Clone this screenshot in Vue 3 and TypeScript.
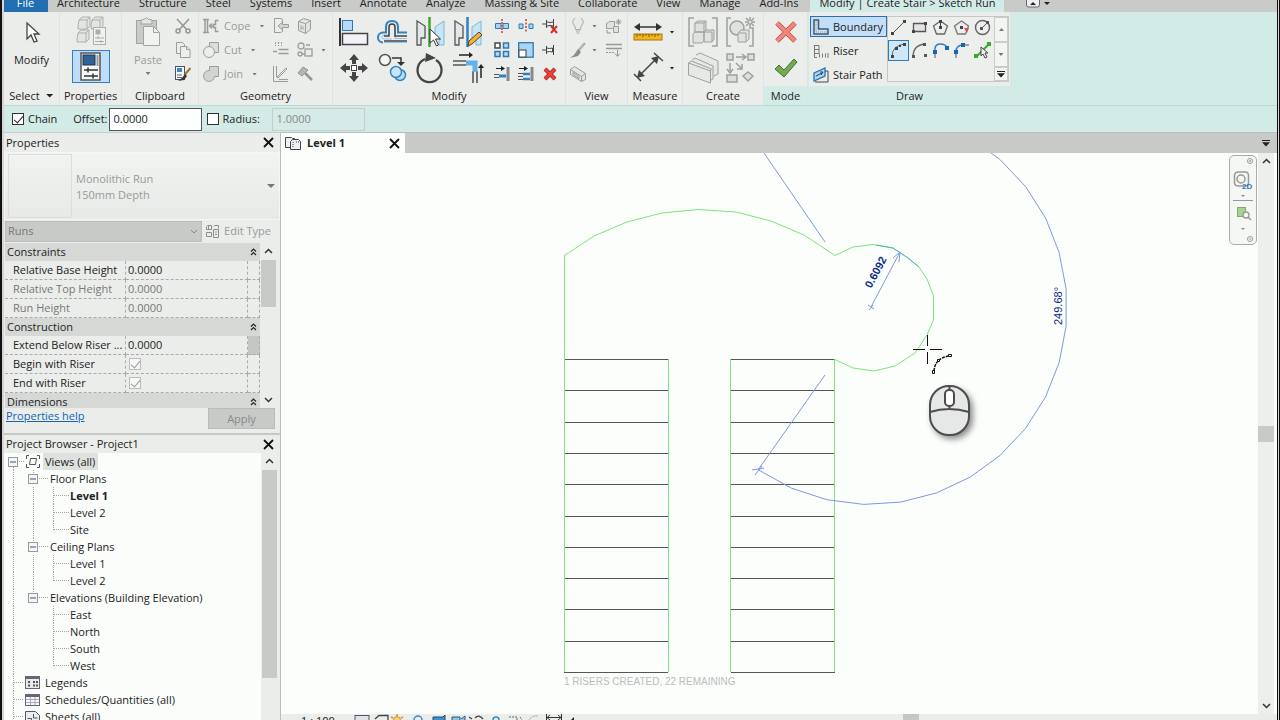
<script setup lang="ts">
import { ref } from 'vue'

type Guide = 'box' | 'line' | 'tee' | 'end' | 'none'

interface TreeRow {
  label: string
  guides: Guide[]
  icon?: 'views' | 'legend' | 'schedule' | 'sheet'
  active?: boolean
  selected?: boolean
}

interface Point {
  x: number
  y: number
}

const tabs = [
  'Architecture', 'Structure', 'Steel', 'Systems', 'Insert', 'Annotate', 'Analyze',
  'Massing & Site', 'Collaborate', 'View', 'Manage', 'Add-Ins',
]

const chain = ref(true)
const useRadius = ref(false)
const offset = ref('0.0000')
const radius = ref('1.0000')

const groups = [
  {
    name: 'Constraints',
    rows: [
      { id: 'base', name: 'Relative Base Height', value: '0.0000', muted: false },
      { id: 'top', name: 'Relative Top Height', value: '0.0000', muted: true },
      { id: 'run', name: 'Run Height', value: '0.0000', muted: true },
    ],
  },
  {
    name: 'Construction',
    rows: [
      { id: 'extend', name: 'Extend Below Riser ...', value: '0.0000', muted: false, more: true },
      { id: 'begin', name: 'Begin with Riser', check: true },
      { id: 'finish', name: 'End with Riser', check: true },
    ],
  },
  { name: 'Dimensions', rows: [] },
] as {
  name: string
  rows: { id: string; name: string; value?: string; muted?: boolean; more?: boolean; check?: boolean }[]
}[]

const tree: TreeRow[] = [
  { label: 'Views (all)', guides: ['box'], icon: 'views', selected: true },
  { label: 'Floor Plans', guides: ['line', 'box'] },
  { label: 'Level 1', guides: ['line', 'line', 'tee'], active: true },
  { label: 'Level 2', guides: ['line', 'line', 'tee'] },
  { label: 'Site', guides: ['line', 'line', 'end'] },
  { label: 'Ceiling Plans', guides: ['line', 'box'] },
  { label: 'Level 1', guides: ['line', 'line', 'tee'] },
  { label: 'Level 2', guides: ['line', 'line', 'end'] },
  { label: 'Elevations (Building Elevation)', guides: ['line', 'box'] },
  { label: 'East', guides: ['line', 'none', 'tee'] },
  { label: 'North', guides: ['line', 'none', 'tee'] },
  { label: 'South', guides: ['line', 'none', 'tee'] },
  { label: 'West', guides: ['line', 'none', 'end'] },
  { label: 'Legends', guides: ['tee'], icon: 'legend' },
  { label: 'Schedules/Quantities (all)', guides: ['tee'], icon: 'schedule' },
  { label: 'Sheets (all)', guides: ['tee'], icon: 'sheet' },
]

const treads = Array.from({ length: 11 }, (_, i) => Math.round(359 + i * 31.3) + 0.5)

const centre: Point = { x: 870, y: 307.5 }
const angleArc = Array.from({ length: 18 }, (_, i) => {
  const a = ((124.3 - i * 10.81) * Math.PI) / 180
  return `${(centre.x + 197 * Math.cos(a)).toFixed(1)},${(centre.y + 197 * Math.sin(a)).toFixed(1)}`
}).join(' ')
</script>

<template>
  <div class="app">
    <nav class="tabs" aria-label="Ribbon tabs">
      <button class="tab file">File</button>
      <button v-for="t in tabs" :key="t" class="tab">{{ t }}</button>
      <button class="tab current">Modify | Create Stair &gt; Sketch Run</button>
      <button class="tab-tool" aria-label="Minimize ribbon">
        <svg width="26" height="12" viewBox="0 0 26 12">
          <rect x="1.500" y="-4" width="13" height="11" rx="2" fill="#eee" stroke="#667" />
          <path d="M5 5l3-3 3 3z" fill="#222" /><path d="M19 2h6l-3 3z" fill="#222" />
        </svg>
      </button>
    </nav>

    <div class="ribbon">
      <section class="panel select">
        <div class="body">
          <button class="stack">
            <svg width="24" height="32" viewBox="0 0 24 32"><path d="M7 5v16l4-4 3 7 3-1-3-7h5z" fill="#fff" stroke="#444" stroke-width="1.300" /></svg>
            <span>Modify</span>
          </button>
        </div>
        <h2>Select <i class="caret dark"></i></h2>
      </section>

      <section class="panel props">
        <div class="body two">
          <button class="icon" aria-label="Type properties">
            <svg width="32" height="32" viewBox="0 0 32 32" fill="#e3e5e3" stroke="#adafad">
              <path d="M4 4l3-3h8v9l-3 3H3q0-5 1-9zM17 4l3-3h8v9l-3 3h-9q0-5 1-9zM3 17l3-3h8v9l-3 3H2q0-5 1-9z" />
              <path d="M4 4h8v9M17 4h8v9M3 17h8v9M12 4l3-3M25 4l3-3M11 17l3-3" fill="none" />
              <rect x="18.500" y="11.500" width="12" height="17" fill="#f0f2f0" /><rect x="21" y="14" width="4" height="4" fill="#aaa" />
              <path d="M20 22h9M20 25.500h9M23 20v3M26 24v3" />
            </svg>
          </button>
          <button class="icon pressed" aria-label="Properties">
            <svg width="22" height="30" viewBox="0 0 22 30">
              <rect x="1" y="1" width="19" height="27" fill="#f7f9fb" stroke="#555" stroke-width="1.500" />
              <rect x="3" y="3" width="12" height="10" fill="#2f6398" stroke="#234" /><path d="M17.500 3v11" stroke="#999" stroke-width="2" />
              <path d="M4 18h14M4 24h14M8 15.500v5M13 21.500v5" stroke="#333" stroke-width="1.500" />
            </svg>
          </button>
        </div>
        <h2>Properties</h2>
      </section>

      <section class="panel clip">
        <div class="body">
          <button class="stack muted">
            <svg width="28" height="32" viewBox="0 0 28 32" fill="#e4e6e4" stroke="#a2a4a2">
              <rect x="2.500" y="4.500" width="20" height="23" fill="#c9cbc9" /><path d="M7 8V4l4-1q1.500-3 3 0l4 1v4z" />
              <path d="M9.500 10.500h10l6 6v13h-16z" fill="#f1f3f1" /><path d="M19.500 10.500v6h6" fill="none" />
            </svg>
            <span>Paste</span><i class="caret"></i>
          </button>
          <div class="small one">
            <button aria-label="Cut to clipboard"><svg width="16" height="16" viewBox="0 0 16 16" fill="none" stroke="#949694" stroke-width="1.500"><path d="M2 1l10 11M14 1L4 12" /><circle cx="3" cy="13" r="2" /><circle cx="13" cy="13" r="2" /></svg></button>
            <button aria-label="Copy to clipboard"><svg width="16" height="16" viewBox="0 0 16 16" fill="#eceeec" stroke="#9c9e9c"><path d="M1.500.5h6l2 2v9h-8z" /><path d="M5.500 4.500h6l3.500 3v8H5.500z" /><path d="M11.500 4.500v3h3" /></svg></button>
            <button aria-label="Match type"><svg width="16" height="16" viewBox="0 0 16 16"><rect x=".5" y=".5" width="9" height="13" fill="#f6f8fa" stroke="#456" /><rect x="2" y="2" width="5" height="4" fill="#3f85c4" /><path d="M2 9h5M2 11.500h5" stroke="#666" /><path d="M15.500 2l-6 7" stroke="#9a7430" stroke-width="2" /><path d="M10 8l2 2-3 4-6 1 4-3z" fill="#333" /></svg></button>
          </div>
        </div>
        <h2>Clipboard</h2>
      </section>

      <section class="panel geo muted">
        <div class="body">
          <div class="named">
            <button><svg width="16" height="16" viewBox="0 0 16 16" fill="none" stroke="#9a9c9a" stroke-width="1.500"><path d="M0 1.500h6M0 14.500h6M2 2v12M4.500 2v12M7 8h4M9 5.500L6.500 8 9 10.500M15.500 2.500h-3v4h-2v3h2v4h3" /></svg><span>Cope</span><i class="caret"></i></button>
            <button><svg width="16" height="16" viewBox="0 0 16 16" fill="#eceeec" stroke="#9a9c9a"><path d="M6.500.5h9v10h-9z" fill="#dcdedc" /><circle cx="6" cy="10" r="5.500" /></svg><span>Cut</span><i class="caret"></i></button>
            <button><svg width="16" height="16" viewBox="0 0 16 16" fill="#d2d4d2" stroke="#9a9c9a"><path d="M6.500.5h9v10h-4a5.500 5.500 0 1 1-5-6z" /></svg><span>Join</span><i class="caret"></i></button>
          </div>
          <div class="small">
            <button aria-label="Wall opening"><svg width="16" height="16" viewBox="0 0 16 16" fill="#eceeec" stroke="#9a9c9a"><path d="M9.500 4V1.500L8 .5H1.500v14h6l2-1V11" /><path d="M15.500 6.500h-6V4L5 8l4.500 4V9.500h6z" fill="#d4d6d4" /></svg></button>
            <button aria-label="Split face"><svg width="16" height="16" viewBox="0 0 16 16" fill="#e2e4e2" stroke="#9a9c9a"><path d="M1.500 3.500l7 2 5-3v9l-5 4-7-3zM8.500 5.500v10M4 7.500v4M6 8.500v3M1.500 3.500l5-3 7 2" /></svg></button>
            <button aria-label="Beam joins"><svg width="16" height="16" viewBox="0 0 16 16" stroke="#9a9c9a" fill="none"><path d="M2.500 0v4M5.500 0v4M8.500 0v4" stroke-dasharray="2 1" /><path d="M5.500 7.500h10M5.500 11.500h10M0 9.500h4" stroke-width="1.500" /></svg></button>
            <button class="wide" aria-label="Paint"><svg width="16" height="16" viewBox="0 0 16 16" fill="none" stroke="#9a9c9a" stroke-width="1.300"><circle cx="4" cy="4" r="3" /><rect x="8" y="7" width="7" height="7" /><circle cx="3" cy="12" r="2" /><path d="M9 3h4M5 12h3" /></svg><i class="caret"></i></button>
            <button aria-label="Wall joins"><svg width="16" height="16" viewBox="0 0 16 16" fill="none" stroke="#9a9c9a"><path d="M.5 0v15.500H15M3.500 0v11M14 3l-8 8-2 1 1-2 8-8zM6 13.500h9" /></svg></button>
            <button aria-label="Demolish"><svg width="16" height="16" viewBox="0 0 16 16" fill="#b4b6b4" stroke="#949694"><path d="M1 7l5-6 5 3-6 6z" /><path d="M8 7l7 7" stroke-width="2.500" /></svg></button>
          </div>
        </div>
        <h2>Geometry</h2>
      </section>

      <section class="panel mod">
        <div class="body">
          <div class="large four">
            <button aria-label="Align"><svg width="32" height="32" viewBox="0 0 32 32"><path d="M2 2v28" stroke="#333" stroke-width="2" /><rect x="4.500" y="4.500" width="10" height="10" fill="#b9dcf6" stroke="#2d78ba" /><rect x="4.500" y="17.500" width="25" height="11" fill="#f2f2f8" stroke="#444" stroke-width="1.500" /></svg></button>
            <button aria-label="Offset"><svg width="32" height="32" viewBox="0 0 32 32" fill="none"><path d="M7 26.500a5 5 0 0 1 0-10h3V11q0-6 6-6t6 6v5.500h9" stroke="#3682bd" stroke-width="2" /><path d="M31 26.500H8M31 22.500H19V11q0-3-3-3t-3 3v8H8q-2 0-2 2t2 2h8" stroke="#8fc5eb" /><path d="M31 20H19V11q0-3-3-3t-3 3v9H8M31 25H8" stroke="#444" stroke-width="1.500" /></svg></button>
            <button aria-label="Mirror by picking axis"><svg width="32" height="32" viewBox="0 0 32 32"><path d="M3 5l8 5v12H7v7H3z" fill="#e4e7ea" stroke="#555" stroke-width="1.300" /><path d="M30 5l-9 6v11h4v7h5z" fill="#c6e6f8" stroke="#7fb6d8" /><path d="M15.500 1v30" stroke="#44a52e" stroke-width="2.500" /><path d="M16 13v14l3.500-3 3 6 2-1-3-6h5z" fill="#fff" stroke="#333" /></svg></button>
            <button aria-label="Mirror by drawing axis"><svg width="32" height="32" viewBox="0 0 32 32"><path d="M3 5l8 5v12H7v7H3z" fill="#e4e7ea" stroke="#555" stroke-width="1.300" /><path d="M29 5l-9 6v11h4v7h5z" fill="#c6e6f8" stroke="#7fb6d8" /><path d="M15.500 1v30" stroke="#2e82c2" stroke-width="2.500" /><path d="M27 16l3 3-10 9-4 2 1-5z" fill="#f1b43c" stroke="#59401d" /></svg></button>
            <button aria-label="Move"><svg width="32" height="32" viewBox="0 0 32 32" fill="#444"><path d="M16 2l5 6h-3v4h-4V8h-3zM16 30l5-6h-3v-4h-4v4h-3zM2 16l6-5v3h4v4H8v3zM30 16l-6-5v3h-4v4h4v3z" /><rect x="13.500" y="13.500" width="5" height="5" fill="#fff" stroke="#444" /></svg></button>
            <button aria-label="Copy"><svg width="32" height="32" viewBox="0 0 32 32"><circle cx="9" cy="8" r="5.500" fill="#f5f5f5" stroke="#555" stroke-width="1.500" /><path d="M16 6h9v6" fill="none" stroke="#333" stroke-width="1.500" /><path d="M21 10h8l-4 4z" fill="#333" /><circle cx="24" cy="23" r="5.500" fill="#b9def6" stroke="#3a85bd" stroke-width="1.500" /><circle cx="20" cy="20" r="5.500" fill="#c9e6f8" stroke="#3a85bd" stroke-width="1.500" /></svg></button>
            <button aria-label="Rotate"><svg width="32" height="32" viewBox="0 0 32 32"><path d="M11 7a12 12 0 1 0 11 1" fill="none" stroke="#444" stroke-width="2.300" /><path d="M12 1l10 5-11 4z" fill="#444" /></svg></button>
            <button aria-label="Trim to corner"><svg width="32" height="32" viewBox="0 0 32 32" fill="none"><path d="M1 9h13M1 13h13M21 19v12M25 19v12" stroke="#555" stroke-width="1.600" /><path d="M14 11h9v9" stroke="#62b1e8" stroke-width="5" /><path d="M7 3h12M29 26V14" stroke="#222" stroke-width="1.500" /><path d="M17 0l4 3-4 3zM26 16l3-4 3 4z" fill="#222" /></svg></button>
          </div>
          <div class="small three">
            <button aria-label="Split element"><svg width="16" height="16" viewBox="0 0 16 16"><path d="M1.500 5.500H7v5H1.500zM9 5.500h5.500v5H9z" fill="#a9d4f1" stroke="#2f78b4" /><path d="M8 1v14" stroke="#d43c2c" stroke-dasharray="2 1" stroke-width="1.500" /></svg></button>
            <button aria-label="Split with gap"><svg width="16" height="16" viewBox="0 0 16 16"><path d="M1 6h4v4.500H1zM11 6h4v4.500h-4z" fill="#a9d4f1" stroke="#2f78b4" /><path d="M8 1v14" stroke="#d43c2c" stroke-dasharray="2 1.500" stroke-width="1.500" /></svg></button>
            <button aria-label="Unpin"><svg width="16" height="16" viewBox="0 0 16 16"><path d="M0 6h4M4.500 2v8M5 4q3 1 6 0M5 8q3-1 6 0M11.500 1v10" stroke="#444" fill="none" /><path d="M9 8l6 7M15 8l-6 7" stroke="#cf3027" stroke-width="2" /></svg></button>
            <button aria-label="Array"><svg width="16" height="16" viewBox="0 0 16 16" stroke-width="1.500"><rect x="1" y="1" width="5" height="5" fill="#fff" stroke="#444" /><path d="M9.500 1h5v5h-5zM1 9.500h5v5H1zM9.500 9.500h5v5h-5z" fill="#b5dcf5" stroke="#2f78b4" /></svg></button>
            <button aria-label="Scale"><svg width="16" height="16" viewBox="0 0 16 16"><rect x=".7" y=".7" width="14.500" height="14.500" fill="#a9d6f4" stroke="#2f78b4" stroke-width="1.300" /><rect x="1" y="8" width="7" height="7" fill="#fff" stroke="#444" /></svg></button>
            <button aria-label="Pin"><svg width="16" height="16" viewBox="0 0 16 16" fill="#f4f4f4" stroke="#444"><path d="M0 8h4M4.500 4v8M4.500 6q3 1 6 0v4q-3-1-6 0M11.500 3v10" /></svg></button>
            <button aria-label="Trim single"><svg width="16" height="16" viewBox="0 0 16 16"><path d="M2 2.500h6" stroke="#222" /><path d="M7 0l4 2.500L7 5z" fill="#222" /><path d="M0 8.500h5M0 11.500h5" stroke="#555" /><path d="M5 10h7" stroke="#2f82c2" stroke-width="3" /><path d="M14 1v14" stroke="#888" stroke-width="3" /></svg></button>
            <button aria-label="Trim multiple"><svg width="16" height="16" viewBox="0 0 16 16"><path d="M1 2.500h6" stroke="#222" /><path d="M6 0l4 2.500L6 5z" fill="#222" /><path d="M0 7.500h5M0 10.500h5M0 13.500h5" stroke="#555" /><path d="M5 8h7M5 13h7" stroke="#2f82c2" stroke-width="2.500" /><path d="M14 1v14" stroke="#888" stroke-width="3" /></svg></button>
            <button aria-label="Delete"><svg width="16" height="16" viewBox="0 0 16 16"><path d="M3 3l10 10M13 3L3 13" stroke="#a41e19" stroke-width="4" /><path d="M3 3l10 10M13 3L3 13" stroke="#e6453c" stroke-width="2.500" /></svg></button>
          </div>
        </div>
        <h2>Modify</h2>
      </section>

      <section class="panel view">
        <div class="body">
          <div class="small views">
            <button class="wide" aria-label="Hide in view"><svg width="16" height="16" viewBox="0 0 16 16" fill="#e9ebe9" stroke="#a6a8a6"><path d="M5.500 11.500q0-3-1.500-4.500a5 5 0 1 1 8 0q-1.500 1.500-1.500 4.500zM6 13h4M6.500 15h3" /></svg><i class="caret"></i></button>
            <button aria-label="Displace elements"><svg width="16" height="16" viewBox="0 0 16 16" fill="#e0e2e0" stroke="#9a9c9a"><path d="M.5 5.500l3-2h5v5l-2 2h-6zM7.500 8.500h5v6h-5zM1 12v3h4M12.500 1v6M9.500 4h6M10.500 2l4 4M14.500 2l-4 4" /></svg></button>
            <button class="wide" aria-label="Override graphics"><svg width="16" height="16" viewBox="0 0 16 16"><path d="M15 1L8 9" stroke="#b0b0b0" stroke-width="2.500" /><path d="M8 7l3 3-3 4-8 2 4-3z" fill="#8c8c8c" /></svg><i class="caret"></i></button>
            <button aria-label="Linework"><svg width="16" height="16" viewBox="0 0 16 16" stroke="#999" fill="none"><path d="M0 2.500h16M0 6.500h16" stroke-width="1.500" /><path d="M0 10.500h8" stroke-dasharray="2 1" /><path d="M11.500 8v6M9 11.500l2.500 3 2.500-3" /></svg></button>
            <button class="wide" aria-label="Section box"><svg width="16" height="16" viewBox="0 0 16 16" fill="#e4e6e4" stroke="#9a9c9a"><path d="M.5 3.500l4-3 11 7v6l-4 2-11-7zM.5 3.500l11 7v5M11.500 10.500l4-3" /><path d="M3 6.500l6 4v2l-6-4z" /></svg></button>
          </div>
        </div>
        <h2>View</h2>
      </section>

      <section class="panel measure">
        <div class="body">
          <div class="large">
            <button aria-label="Measure"><svg width="32" height="32" viewBox="0 0 32 32"><path d="M4 11h24" stroke="#333" stroke-width="1.500" /><path d="M2 11l6-4v8zM30 11l-6-4v8z" fill="#333" /><rect x="2" y="18" width="28" height="6" fill="#f2b51f" stroke="#a87909" /><path d="M5 18v3M8 18v2M11 18v3M14 18v2M17 18v3M20 18v2M23 18v3M26 18v2" stroke="#805600" /></svg><i class="caret dark"></i></button>
            <button aria-label="Aligned dimension"><svg width="32" height="32" viewBox="0 0 32 32"><path d="M5 26L26 5M2 22l7 7M22 1l9 8" stroke="#444" stroke-width="1.500" /><path d="M5 26l2-8 6 6zM27 4l-8 2 6 6z" fill="#444" /></svg><i class="caret dark"></i></button>
          </div>
        </div>
        <h2>Measure</h2>
      </section>

      <section class="panel create">
        <div class="body">
          <div class="large">
            <button aria-label="Create assembly"><svg width="32" height="32" viewBox="0 0 32 32" fill="#e0e2e0" stroke="#9ea09e"><path d="M7 2H2v28h5M25 2h5v28h-5" fill="none" stroke-width="1.500" /><path d="M6 7l3-2h8v9h7l3-2v12l-3 2H6z" stroke="none" /><path d="M8 7l3-2h8v9l-2 2H8zM6 18l2-2h9v9l-2 2H6zM17 16l2-2h8v9l-2 3h-8zM8 7h9v9M17 16h8v10M17 7l2-2" /></svg></button>
            <button aria-label="Create parts"><svg width="32" height="32" viewBox="0 0 32 32" fill="#e0e2e0" stroke="#9ea09e"><path d="M7 2H3v28h4M25 12h4v18h-4" fill="none" stroke-width="1.500" /><circle cx="13" cy="12" r="7" stroke-width="1.500" /><path d="M14 17l3-3h8v9l-3 3h-8zM14 17h8v9" /><path d="M26 1v10M21 6h10M22 2l8 8M30 2l-8 8" stroke-width="1.500" /><circle cx="26" cy="6" r="2" /></svg></button>
            <button aria-label="Create group"><svg width="32" height="32" viewBox="0 0 32 32" fill="#e6e8e6" stroke="#9ea09e"><path d="M9 3l4-2 18 8v13l-4 2" /><path d="M5 8l3-2 18 8v13l-4 2" /><path d="M1.500 11l22 8v12l-22-8zM1.500 11l3-2 20 8-1 2" /></svg></button>
            <button aria-label="Create similar"><svg width="32" height="32" viewBox="0 0 32 32" fill="#dcdedc" stroke="#9ea09e" stroke-width="1.500"><rect x="3" y="2" width="6" height="6" /><rect x="24" y="2" width="6" height="6" /><rect x="3" y="23" width="10" height="7" /><path d="M24 20l5 4-5 5-5-5z" /><path d="M12 5h9M18 2l4 3-4 3M6 11v8M3 17l3 4 3-4M12 11l6 6M18 12v5h-5" fill="none" /></svg></button>
          </div>
        </div>
        <h2>Create</h2>
      </section>

      <section class="panel mode">
        <div class="body two">
          <button class="icon" aria-label="Cancel edit mode"><svg width="24" height="24" viewBox="0 0 24 24"><path d="M3 3l18 18M21 3L3 21" stroke="#bd5147" stroke-width="5" /><path d="M3 3l18 18M21 3L3 21" stroke="#f0897b" stroke-width="3.500" /></svg></button>
          <button class="icon" aria-label="Finish edit mode"><svg width="24" height="24" viewBox="0 0 24 24"><path d="M1 13l4-4 5 5L20 3l3 3-13 15z" fill="#73ac50" stroke="#43722d" /></svg></button>
        </div>
        <h2>Mode</h2>
      </section>

      <section class="panel draw">
        <div class="body">
          <div class="named sketch">
            <button class="on"><svg width="16" height="16" viewBox="0 0 16 16"><path d="M1 1h4.500v9H15v5H1z" fill="#cde4f8" stroke="#48586a" stroke-width="1.500" /><path d="M3 3v10h11" stroke="#8296aa" fill="none" stroke-dasharray="1 1" /></svg><span>Boundary</span></button>
            <button><svg width="16" height="16" viewBox="0 0 16 16" fill="none" stroke="#777"><path d="M1.500 2v12.500H4M1 2.500h5V10M1 6.500h5M1 10.500h5M6.500 14.500v-4M9.500 14.500v-4M12.500 14.500v-4M15 10v5" /></svg><span>Riser</span></button>
            <button><svg width="16" height="16" viewBox="0 0 16 16"><path d="M11 4h4v11H2" stroke="#445" fill="none" /><path d="M1 6l11-5v8L1 14z" fill="#a9d5f2" stroke="#2b70a8" stroke-width="1.300" /><path d="M3 9l6-3M7 5l3 0-2 3" stroke="#246" fill="none" /></svg><span>Stair Path</span></button>
          </div>
          <div class="gallery">
            <div class="tools">
              <button aria-label="Line"><svg width="17" height="17" viewBox="0 0 17 17"><path d="M2 15L15 2" stroke="#555" /><path d="M1 13h3v3H1zM13 1h3v3h-3z" fill="#444" /></svg></button>
              <button aria-label="Rectangle"><svg width="17" height="17" viewBox="0 0 17 17"><path d="M2.500 4.500h12v8h-12z" fill="#e3e3e3" stroke="#555" stroke-width="1.300" /><path d="M1 11h3v3H1zM13 3h3v3h-3z" fill="#444" /></svg></button>
              <button aria-label="Inscribed polygon"><svg width="17" height="17" viewBox="0 0 17 17"><path d="M8.500 2l7 5-3 8h-8l-3-8z" fill="#eee" stroke="#666" stroke-width="1.300" /><path d="M8.500 2v7" stroke="#444" /><path d="M7 1h3v3H7zM7 7h3v3H7z" fill="#444" /></svg></button>
              <button aria-label="Circumscribed polygon"><svg width="17" height="17" viewBox="0 0 17 17"><path d="M8.500 2l7 5-3 8h-8l-3-8z" fill="#eee" stroke="#777" stroke-width="1.300" /><path d="M7 7h3v3H7z" fill="#444" /><path d="M11 9h5l-2 5z" fill="#d5534b" /></svg></button>
              <button aria-label="Circle"><svg width="17" height="17" viewBox="0 0 17 17"><circle cx="8.500" cy="8.500" r="7" fill="#eee" stroke="#666" stroke-width="1.500" /><path d="M8 9l6-6" stroke="#555" /><path d="M6 8h3v3H6zM12 2h3v3h-3z" fill="#555" /></svg></button>
              <button class="on" aria-label="Start-end-radius arc"><svg width="17" height="17" viewBox="0 0 17 17"><path d="M2 15Q2 3 15 2" fill="none" stroke="#666" /><path d="M1 13h3v3H1zM13 1h3v3h-3zM5 5h3v3H5zM9 3h2v2H9z" fill="#444" /></svg></button>
              <button aria-label="Center-ends arc"><svg width="17" height="17" viewBox="0 0 17 17"><path d="M2 15Q2 3 14 2" fill="none" stroke="#666" stroke-width="1.300" /><path d="M1 13h3v3H1zM12 1h3v3h-3zM13 12h3v3h-3z" fill="#555" /></svg></button>
              <button aria-label="Tangent end arc"><svg width="17" height="17" viewBox="0 0 17 17"><path d="M3 10Q2 2 8 2q6 0 7 4" fill="none" stroke="#2b7fd2" stroke-width="1.500" /><path d="M1 8h4v4H1zM13 4h4v4h-4z" fill="#1865b4" /><path d="M3 12v4" stroke="#555" /></svg></button>
              <button aria-label="Fillet arc"><svg width="17" height="17" viewBox="0 0 17 17"><path d="M3 10Q3 3 10 3" fill="none" stroke="#2b7fd2" stroke-width="1.500" /><path d="M1 8h4v4H1zM8 1h4v4H8z" fill="#1865b4" /><path d="M3 12v4M12 3h4" stroke="#555" /></svg></button>
              <button aria-label="Pick lines"><svg width="17" height="17" viewBox="0 0 17 17"><path d="M2 15L15 2" stroke="#33ad2b" stroke-width="2" /><path d="M0 12h4v4H0zM13 0h4v4h-4z" fill="#33ad2b" /><path d="M7 5v9l2-2 2 4 2-1-2-4h3z" fill="#eee" stroke="#444" /></svg></button>
            </div>
            <div class="scroller">
              <button aria-label="Previous row"><i class="caret up"></i></button>
              <button aria-label="Next row"><i class="caret"></i></button>
              <button aria-label="More tools"><i class="caret dark bar"></i></button>
            </div>
          </div>
        </div>
        <h2>Draw</h2>
      </section>
    </div>

    <form class="options" @submit.prevent>
      <label class="tick"><input v-model="chain" type="checkbox" />Chain</label>
      <label for="offset" class="offset-label">Offset:</label>
      <input id="offset" v-model="offset" class="field" type="text" />
      <label class="tick radius"><input v-model="useRadius" type="checkbox" />Radius:</label>
      <input v-model="radius" class="field off" type="text" aria-label="Radius value" disabled />
    </form>

    <main class="work">
      <aside class="dock">
        <section class="properties">
          <header class="title">
            <h3>Properties</h3>
            <button aria-label="Close properties"><svg width="11" height="11" viewBox="0 0 11 11"><path d="M1 1l9 9M10 1l-9 9" stroke="#111" stroke-width="1.800" /></svg></button>
          </header>
          <div class="type">
            <div class="thumb"></div>
            <div class="type-name">Monolithic Run<br />150mm Depth</div>
            <i class="caret big"></i>
          </div>
          <div class="category">
            <div class="pick">
              <select aria-label="Category" disabled><option>Runs</option></select>
              <svg width="8" height="6" viewBox="0 0 8 6"><path d="M1 1l3 3 3-3" fill="none" stroke="#888" /></svg>
            </div>
            <button class="edit" disabled>
              <svg width="14" height="14" viewBox="0 0 14 14" fill="none" stroke="#8c8c8c"><path d="M.5 2.500l1-1h4v4h-5zM7.500 2.500l1-1h4v3M.5 8.500h5v4h-5zM7.500 5.500h5v8h-5zM9 8h2M9 10.500h2M2.500 2v3" /></svg>
              Edit Type
            </button>
          </div>
          <div class="scrolled">
            <div class="grid-wrap">
              <table>
                <colgroup><col class="c1" /><col /><col class="c3" /></colgroup>
                <tbody v-for="g in groups" :key="g.name">
                  <tr class="group">
                    <th colspan="3"><div><span>{{ g.name }}</span><svg width="7" height="8" viewBox="0 0 7 8"><path d="M1 3.500L3.500 1 6 3.500M1 7l2.500-2.500L6 7" fill="none" stroke="#222" stroke-width="1.200" /></svg></div></th>
                  </tr>
                  <tr v-for="r in g.rows" :key="r.id" :class="{ muted: r.muted }">
                    <td class="name"><label :for="r.check ? r.id : undefined">{{ r.name }}</label></td>
                    <td class="value"><input v-if="r.check" :id="r.id" type="checkbox" checked disabled /><template v-else>{{ r.value }}</template></td>
                    <td :class="{ more: r.more }"></td>
                  </tr>
                </tbody>
              </table>
            </div>
            <div class="vscroll">
              <svg width="9" height="6" viewBox="0 0 9 6"><path d="M1 5l3.500-3.500L8 5" fill="none" stroke="#333" stroke-width="1.500" /></svg>
              <div class="track"><div class="thumb-bar short"></div></div>
              <svg width="9" height="6" viewBox="0 0 9 6"><path d="M1 1l3.500 3.500L8 1" fill="none" stroke="#333" stroke-width="1.500" /></svg>
            </div>
          </div>
          <div class="foot">
            <a href="#help">Properties help</a>
            <button disabled>Apply</button>
          </div>
        </section>

        <section class="browser">
          <header class="title">
            <h3>Project Browser - Project1</h3>
            <button aria-label="Close project browser"><svg width="11" height="11" viewBox="0 0 11 11"><path d="M1 1l9 9M10 1l-9 9" stroke="#111" stroke-width="1.800" /></svg></button>
          </header>
          <div class="tree-area">
            <ul class="tree">
              <li v-for="(r, i) in tree" :key="i">
                <svg v-for="(g, k) in r.guides" :key="k" class="guide" width="20" height="17" viewBox="0 0 20 17">
                  <g stroke="#a4a4a4" stroke-dasharray="1 1">
                    <path v-if="g === 'line' || g === 'tee'" d="M9.500 0v17" />
                    <path v-if="g === 'end'" d="M9.500 0v9" />
                    <path v-if="g === 'box'" :d="k === 0 ? 'M9.500 14v3' : 'M9.500 0v4'" />
                    <path v-if="g === 'tee' || g === 'end'" :d="k === 0 ? 'M10 8.500h10' : 'M10 8.500h15'" />
                    <path v-if="g === 'box'" :d="k === 0 ? 'M15 8.500h5' : 'M15 8.500h10'" />
                  </g>
                  <g v-if="g === 'box'"><rect x="4.500" y="4.500" width="9" height="9" fill="#f4f5f8" stroke="#999" /><path d="M6 9h6" stroke="#456" /></g>
                </svg>
                <svg v-if="r.icon === 'views'" class="kind" width="16" height="15" viewBox="0 0 16 15" fill="none" stroke="#555"><path d="M4 1.500H1.500V5M12 1.500h2.500V5M4 13.500H1.500V10M12 13.500h2.500V10M5.500 4.500h6l-1 6h-6z" /></svg>
                <svg v-if="r.icon === 'legend'" class="kind" width="16" height="15" viewBox="0 0 16 15"><rect x=".5" y="1.500" width="14" height="12" fill="#e8eaec" stroke="#667" /><path d="M1 3h13" stroke="#667" stroke-width="2" /><path d="M3 7h3M8 7h5M3 10.500h2M8 10.500h5" stroke="#555" stroke-width="2" stroke-dasharray="2 1" /></svg>
                <svg v-if="r.icon === 'schedule'" class="kind" width="16" height="15" viewBox="0 0 16 15"><rect x=".5" y="2.500" width="14" height="11" fill="#f6f7f8" stroke="#667" /><path d="M1 4h13" stroke="#667" stroke-width="2" /><path d="M1 7.500h13M1 10.500h13M5.500 5v8M10 5v8" stroke="#aab" /></svg>
                <svg v-if="r.icon === 'sheet'" class="kind" width="16" height="15" viewBox="0 0 16 15" fill="#e8edf2" stroke="#556"><path d="M.5 2.500h10l4 4v9H.5z" /><path d="M2.500 9.500h4v5M8.500 5v4h4" /></svg>
                <span class="label" :class="[{ bold: r.active, picked: r.selected }, r.icon ? 'root' : 'nested']">{{ r.label }}</span>
              </li>
            </ul>
            <div class="vscroll">
              <svg width="9" height="6" viewBox="0 0 9 6"><path d="M1 5l3.500-3.500L8 5" fill="none" stroke="#333" stroke-width="1.500" /></svg>
              <div class="track"><div class="thumb-bar tall"></div></div>
            </div>
          </div>
        </section>
      </aside>

      <section class="document">
        <div class="doc-tabs">
          <div class="doc-tab">
            <svg width="16" height="14" viewBox="0 0 16 14" fill="#eef1f4" stroke="#445"><path d="M.5 1.500h6l1 1h2v9h-9z" /><path d="M5.500 5.500l2-2h6l2 2v8h-10z" /><path d="M8 6v5M11 6h3" stroke-dasharray="1 1" /></svg>
            <span>Level 1</span>
            <button aria-label="Close view"><svg width="11" height="11" viewBox="0 0 11 11"><path d="M1 1l9 9M10 1l-9 9" stroke="#111" stroke-width="1.800" /></svg></button>
          </div>
          <i class="caret dark bar"></i>
        </div>
        <div class="view-row">
          <div class="canvas">
            <svg class="drawing" role="img" aria-label="Stair sketch">
              <g transform="translate(-281 -153)" fill="none">
                <g stroke="#555">
                  <path v-for="y in treads" :key="y" :d="`M564 ${y}h104M731 ${y}h104`" />
                </g>
                <g stroke="#7be57b">
                  <path d="M564.500 255V672M668.500 359V672M730.500 359V672M834.500 359V672" />
                  <path d="M564.500 255.500L594 236 627 222 662 213 698 209.500 736 212 771 221 804 235 835 255.500 853 247 873 244.500 893 248 908 258 919 267 927 279 933.500 296V320L927 335 915 353 895 366 874 371 853 368 835 359.500" />
                </g>
                <path d="M876 245L893 248 908 258 919 267" stroke="#52b6b0" />
                <g stroke="#8097e0">
                  <path d="M764 153L825 242M825 375L758 470M752 470l12-2M755 475l7-9" />
                  <polyline :points="angleArc" />
                  <path d="M871 307L900 252M893 258l7-6-1 10M868 305l6 4M869 310l4-5" />
                </g>
                <g fill="#0a2a8c" class="dims">
                  <text class="strong" text-anchor="middle" transform="translate(879 274) rotate(-62)">0.6092</text>
                  <text text-anchor="middle" transform="translate(1062 306) rotate(-90)">249.68°</text>
                </g>
                <text x="564" y="685" class="note">1 RISERS CREATED, 22 REMAINING</text>
                <path d="M913 349.500h12M930 349.500h12M927.500 335v11M927.500 352v12" stroke="#111" />
                <path d="M934 371Q935 358 949 356" stroke="#111" stroke-width="1.500" stroke-dasharray="3 1" />
                <path d="M932.500 370.500h2v3h-2zM937.500 359.500h2v2h-2zM948.500 354.500h3v2h-3z" fill="#fff" stroke="#111" />
                <rect class="shade" x="930" y="387" width="41" height="50" rx="20" fill="#888" />
                <g stroke="#4d4d4d" stroke-width="2">
                  <rect x="930" y="386" width="39" height="49" rx="19" fill="#e6e8e7" />
                  <path d="M930 412q19-6 39 0M949.500 387v4M949.500 406v3" />
                  <rect x="945" y="390" width="9" height="16" rx="4" fill="#fff" />
                </g>
              </g>
            </svg>
            <div class="navbar">
              <svg width="26" height="88" viewBox="0 0 26 88" fill="none" stroke="#999">
                <circle cx="20" cy="5" r="2.500" /><path d="M19 4l2 2M21 4l-2 2" stroke-width=".7" />
                <path d="M4.500 20q0-4 4-4h7q3 0 3 4v7q0 3-3 3h-7q-4 0-4-3z" stroke-width="1.500" /><circle cx="11" cy="23" r="4" stroke-width="1.500" />
                <path d="M11 39h4l-2 2zM11 72h4l-2 2z" fill="#888" stroke="none" /><path d="M3 44.500h20" />
                <rect x="7.500" y="51.500" width="8" height="9" fill="#a6d48f" stroke="#7fae6b" /><circle cx="16" cy="59" r="3" fill="#f4f6f5" stroke-width="1.300" /><path d="M18 61l3 3" stroke-width="1.500" />
                <circle cx="20" cy="83" r="2.500" /><path d="M19 83h2" />
                <text x="12" y="33" class="two-d">2D</text>
              </svg>
            </div>
          </div>
          <div class="vscroll main-scroll">
            <svg width="9" height="6" viewBox="0 0 9 6"><path d="M1 5l3.500-3.500L8 5" fill="none" stroke="#333" stroke-width="1.500" /></svg>
            <div class="track middle"><div class="thumb-bar dot"></div></div>
            <svg width="9" height="6" viewBox="0 0 9 6"><path d="M1 1l3.500 3.500L8 1" fill="none" stroke="#333" stroke-width="1.500" /></svg>
          </div>
        </div>
        <footer class="view-bar">
          <span class="scale">1 : 100</span>
          <svg width="222" height="14" viewBox="0 0 222 14" fill="none">
            <rect x="1" y="1.500" width="14" height="10" fill="#dfe3ea" stroke="#556" /><path d="M21 5l4-3.500h9v5l-3 4" stroke="#444" stroke-width="1.300" />
            <circle cx="43" cy="6" r="3.500" fill="#f5d36e" stroke="#c8923a" /><path d="M43 0v2M37 3l2 1M49 3l-2 1" stroke="#c8923a" stroke-width="1.500" />
            <circle cx="64" cy="6" r="4" stroke="#3c87c8" stroke-width="1.500" /><path d="M79 3h10l2-2v8H79z" fill="#3d91cc" stroke="#246" />
            <path d="M98 3h8v6h-8zM107 5l4-3v6" fill="#8dc3e8" stroke="#357" /><path d="M115 3l3 2M121 4q4-4 8 1" stroke="#444" stroke-width="1.300" />
            <circle cx="142" cy="6" r="3" stroke="#3c87c8" stroke-width="1.500" /><path d="M155 3h8v5h-8M166 3l2 3" stroke="#666" stroke-dasharray="2 1" /><path d="M175 6q3-5 9-4" stroke="#bbb" />
            <path d="M192.500 0v8M207.500 0v8M193 3.500h14M196 1l-3 2.500 3 2.500M204 1l3 2.500-3 2.500" stroke="#333" /><path d="M217 6l3-3v6z" fill="#222" />
          </svg>
          <div class="hscroll"><div class="hthumb"></div></div>
        </footer>
      </section>
    </main>
  </div>
</template>

<style>
body { margin: 0; }
</style>

<style scoped>
* { box-sizing: border-box; }
.app {
  height: 100vh;
  display: flex;
  flex-direction: column;
  overflow: hidden;
  border-left: 2px solid #111;
  border-right: 3px double #111;
  padding-left: 2px;
  background: #d6d4d5;
  color: #222;
  font: 11px/16px "Open Sans", "Noto Sans", sans-serif;
}
button, input, select { font: inherit; color: inherit; margin: 0; padding: 0; }
button { border: 0; background: none; display: flex; align-items: center; justify-content: center; }
svg { display: block; flex: none; }
h2, h3 { margin: 0; font-weight: 400; font-size: inherit; }

.caret { flex: none; width: 5px; height: 3px; background: #777; clip-path: polygon(0 0, 100% 0, 50% 100%); }
.caret.dark { background: #222; }
.caret.up { transform: rotate(180deg); }
.caret.big { width: 8px; height: 4px; }
.caret.bar { width: 8px; height: 7px; clip-path: polygon(0 0, 100% 0, 100% 20%, 0 20%, 0 40%, 100% 40%, 50% 100%, 0 40%, 0 0); }

.tabs { flex: none; height: 12px; display: flex; align-items: flex-end; overflow: hidden; background: #c9cbc9; }
.tab { flex: none; height: 18px; line-height: 18px; padding: 0 10px 0 9px; white-space: nowrap; }
.file { width: 44px; background: #1f6fb2; color: #fff; }
.current { width: 194px; margin-left: 2px; padding: 0; background: #d3ebe7; }
.tab-tool { height: 12px; margin-left: 21px; }

.ribbon { flex: none; display: flex; height: 94px; background: #d3ebe7; border-bottom: 1px solid #bcd9d4; }
.panel { flex: none; display: flex; flex-direction: column; padding-top: 2px; background: #ebedeb; border-right: 1px solid #dae5e1; }
.panel h2 { height: 19px; line-height: 19px; text-align: center; display: flex; justify-content: center; align-items: center; gap: 6px; }
.panel h2 .caret { width: 8px; height: 4px; }
.body { height: 72px; display: flex; }
.select { width: 56px; }
.props { width: 62px; }
.clip { width: 77px; }
.geo { width: 134px; }
.mod { width: 233px; }
.view { width: 62px; }
.measure { width: 55px; }
.create { width: 81px; }
.mode { width: 44px; }
.draw { width: 202px; margin-left: 1px; }
.mode h2, .draw h2 { background: #d3ebe7; }
.muted button, .muted.stack { color: #999; }
.stack { flex: 1; flex-direction: column; justify-content: flex-start; line-height: 16px; padding-top: 4px; gap: 2px; }
.clip .stack { padding-top: 2px; padding-left: 6px; gap: 4px; }
.stack svg { height: 32px; }
.body.two { flex-direction: column; align-items: center; }
.icon { height: 36px; width: 38px; }
.icon.pressed { height: 33px; background: #bfdcf8; border: 1px solid #3b7cba; }
.small { display: grid; grid-auto-rows: 24px; grid-template-columns: 24px 24px; }
.small.one { grid-template-columns: 30px; }
.small.three { grid-template-columns: repeat(3, 24px); }
.small.views { grid-template-columns: 34px 20px; padding-left: 4px; }
.wide { justify-content: flex-start; gap: 6px; padding-left: 0; }
.geo .body { padding-left: 4px; }
.geo .wide { padding-left: 4px; gap: 8px; }
.named { display: grid; grid-auto-rows: 24px; width: 66px; }
.named button { justify-content: flex-start; gap: 5px; }
.named .caret { margin-left: 4px; }
.large { display: grid; grid-auto-rows: 36px; grid-template-columns: repeat(2, 38px); }
.large.four { grid-template-columns: repeat(4, 38px); padding-left: 2px; width: 157px; }
.measure .large { grid-template-columns: 50px; }
.create .large { grid-template-columns: 37px 37px; padding-left: 1px; }
.measure button { gap: 6px; }
.sketch { width: 78px; padding: 2px 0 0 1px; grid-auto-rows: 21px; row-gap: 3px; align-content: start; flex: none; }
.sketch button { border: 1px solid transparent; padding-left: 2px; gap: 4px; white-space: nowrap; }
.sketch .on { background: #c3def8; border-color: #2f6ea8; }
.gallery { flex: 1; height: 66px; margin: 2px 1px 0 0; display: flex; border: 1px solid #c5c9c6; background: #edefed; }
.tools { flex: 1; display: grid; grid-template-columns: repeat(5, 21px); grid-auto-rows: 21px; row-gap: 2px; }
.tools .on { background: #cde8fa; border: 1px solid #2f7cb6; }
.scroller { width: 14px; display: grid; grid-template-rows: 25px 25px 14px; }
.scroller button { border: 1px solid #c9ccc9; background: #f3f5f3; }

.options { flex: none; height: 26px; display: flex; align-items: center; padding: 0 0 0 8px; background: #d3ebe7; }
.tick { display: flex; align-items: center; gap: 4px; }
input[type="checkbox"] { appearance: none; width: 12px; height: 12px; border: 1px solid #333; background: #fff; display: flex; justify-content: center; }
input[type="checkbox"]:checked::after { content: ""; width: 4px; height: 8px; border: solid #222; border-width: 0 1px 1px 0; transform: rotate(40deg); }
.offset-label { margin-left: 16px; }
.field { width: 93px; height: 23px; margin-left: 1px; padding: 0 4px 2px; border: 1px solid #555; background: #fcfffd; }
.radius { margin-left: 5px; width: 64px; }
.field.off { border-color: #bcd0cc; background: #d6ebe7; color: #888; }

.work { flex: 1; min-height: 0; display: flex; }
.dock { flex: none; width: 277px; display: flex; flex-direction: column; border-right: 1px solid #bbb; border-top: 1px solid #ccc; background: #ebedeb; }
.title { height: 19px; padding: 0 6px 0 2px; display: flex; align-items: center; justify-content: space-between; }
.type { height: 68px; display: flex; align-items: center; padding: 0 4px 0 3px; border: 1px solid #f5f6f5; background: linear-gradient(#f2f4f2, #e7e9e7); color: #999; }
.thumb { width: 64px; height: 64px; border: 1px solid #dcdedc; }
.type-name { flex: 1; padding: 2px 0 0 4px; }
.category { height: 22px; display: flex; align-items: center; padding-left: 1px; }
.pick { width: 197px; height: 21px; position: relative; }
.pick select { appearance: none; width: 100%; height: 100%; padding-left: 2px; border: 1px solid #bbb; border-radius: 0; background: #c8cac8; color: #777; opacity: 1; }
.pick svg { position: absolute; right: 4px; top: 8px; }
.edit { flex: 1; gap: 4px; padding-right: 5px; color: #999; }
.scrolled { display: flex; height: 166px; padding: 1px 0 0 1px; }
.grid-wrap { width: 255px; overflow: hidden; }
table { width: 100%; table-layout: fixed; border-collapse: separate; border-spacing: 0; }
.c1 { width: 121px; }
.c3 { width: 12px; }
.group th { height: 18px; padding: 0 3px 0 2px; font-weight: 400; background: #d6d8d6; color: #222; }
.group div { display: flex; justify-content: space-between; align-items: center; height: 18px; }
td { height: 19px; padding: 0; border-bottom: 1px dashed #aaa; border-right: 1px dashed #aaa; line-height: 16px; white-space: nowrap; overflow: hidden; }
td.name { padding-left: 8px; }
td.value { padding-left: 2px; }
tr.muted { color: #777; }
td input[type="checkbox"] { border-color: #bbb; background: #f5f6f5; margin-left: 1px; }
td input[type="checkbox"]:checked::after { border-color: #999; }
.more { background: #c5c7c5; }
.vscroll { flex: none; width: 15px; margin-left: 1px; display: flex; flex-direction: column; align-items: center; padding: 5px 0; gap: 6px; }
.track { flex: 1; width: 100%; min-height: 0; }
.thumb-bar { width: 100%; background: #c8cac8; }
.thumb-bar.short { height: 47px; }
.thumb-bar.tall { height: 208px; }
.foot { height: 25px; display: flex; justify-content: space-between; align-items: flex-start; padding: 0 5px 0 2px; }
.foot a { color: #1463b5; }
.foot button { width: 67px; height: 21px; border: 1px solid #bbb; background: #c8cac8; color: #888; }
.browser { flex: 1; min-height: 0; display: flex; flex-direction: column; border-top: 2px solid #c6c8c6; }
.browser .title { height: 18px; }
.tree-area { flex: 1; min-height: 0; display: flex; padding-right: 3px; }
.tree { flex: 1; margin: 0; padding: 0; list-style: none; overflow: hidden; background: #fbfdfb; }
.tree li { height: 17px; display: flex; align-items: center; }
.guide { overflow: visible; }
.kind { margin-left: 1px; }
.label { line-height: 17px; white-space: nowrap; padding-right: 3px; }
.label.root { margin-left: 2px; padding-left: 2px; }
.label.nested { margin-left: 6px; }
.label.picked { background: #dfe1df; }
.label.bold { font-weight: 700; }

.document { flex: 1; min-width: 0; display: flex; flex-direction: column; background: #fbfefb; }
.doc-tabs { flex: none; height: 21px; display: flex; align-items: center; justify-content: space-between; padding-right: 7px; background: #c8cac8; border-top: 1px solid #bbb; }
.doc-tab { align-self: stretch; width: 124px; display: flex; align-items: center; padding: 0 5px 0 4px; gap: 6px; background: #fbfefb; font-weight: 700; }
.doc-tab button { margin-left: auto; }
.view-row { flex: 1; min-height: 0; display: flex; }
.canvas { flex: 1; min-width: 0; position: relative; overflow: hidden; }
.drawing { width: 100%; height: 100%; }
.dims text { font: 11px "Liberation Sans", Arial, sans-serif; }
.dims .strong { font-weight: 700; }
.note { font: 10px "Liberation Sans", Arial, sans-serif; fill: #bbb; }
.shade { filter: blur(3px); transform: translate(2px, 2px); }
.navbar { position: absolute; right: 1px; top: 2px; border: 1px solid #aaa; border-radius: 5px; background: #f5f7f5; }
.two-d { font: 700 8px "Liberation Sans", Arial, sans-serif; fill: #3978b5; stroke: none; }
.main-scroll { width: 16px; margin: 0 3px 0 0; background: #edefed; }
.middle { display: flex; flex-direction: column; justify-content: center; }
.thumb-bar.dot { height: 16px; }
.view-bar { flex: none; height: 6px; display: flex; overflow: hidden; background: #ebedeb; }
.scale { width: 73px; padding-left: 20px; line-height: 14px; }
.hscroll { flex: 1; display: flex; justify-content: center; padding-right: 32px; }
.hthumb { width: 16px; height: 6px; background: #c5c7c5; }
</style>
